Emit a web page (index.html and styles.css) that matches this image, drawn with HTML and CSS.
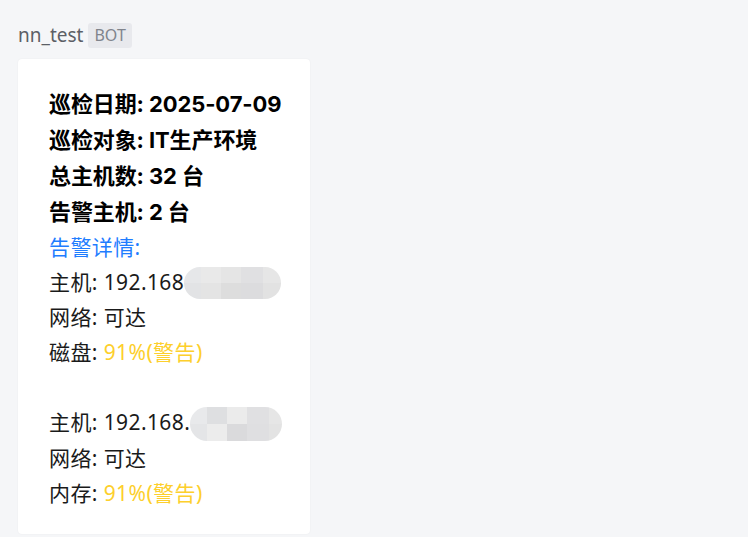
FILE: index.html
```html
<!DOCTYPE html>
<html lang="zh-CN">
<head>
<meta charset="utf-8">
<link rel="stylesheet" href="styles.css">
</head>
<body>
<div class="msg">
  <div class="sender">
    <span class="name">nn_test</span>
    <span class="badge">BOT</span>
  </div>
  <div class="card">
    <div class="b">巡检日期: 2025-07-09</div>
    <div class="b">巡检对象: IT生产环境</div>
    <div class="b">总主机数: 32 台</div>
    <div class="b">告警主机: 2 台</div>
    <div class="n blue">告警详情:</div>
    <div class="n">主机: 192.168<span class="mosaic m1"></span></div>
    <div class="n">网络: 可达</div>
    <div class="n">磁盘: <span class="warn">91%(警告)</span></div>
    <div class="n">&nbsp;</div>
    <div class="n">主机: 192.168.<span class="mosaic m2"></span></div>
    <div class="n">网络: 可达</div>
    <div class="n">内存: <span class="warn">91%(警告)</span></div>
  </div>
</div>
</body>
</html>
```

FILE: styles.css
```css
html, body {
  margin: 0;
  padding: 0;
}
body {
  background: #f5f6f8;
  font-family: "Noto Sans", "Noto Sans CJK SC", sans-serif;
  color: #000;
  width: 748px;
  height: 537px;
  overflow: hidden;
}
.msg {
  padding: 23px 0 0 18px;
}
.sender {
  display: flex;
  align-items: center;
  gap: 5px;
  height: 25px;
}
.name {
  font-size: 19px;
  color: #5c5f66;
  line-height: 25px;
}
.badge {
  background: #e8e9ed;
  color: #80848c;
  font-size: 16px;
  line-height: 25px;
  height: 25px;
  padding: 0 6px;
  border-radius: 3px;
}
.card {
  margin-top: 11px;
  width: 292px;
  height: 475px;
  box-sizing: border-box;
  background: #fff;
  border-radius: 4px;
  box-shadow: 0 0 2px rgba(0, 0, 0, 0.06);
  padding: 27px 0 0 31px;
}
.b {
  font-family: "Inter", "Noto Sans CJK SC", sans-serif;
  font-size: 22px;
  font-weight: 700;
  line-height: 36px;
  white-space: nowrap;
  letter-spacing: -0.1px;
}
.n {
  font-family: "Noto Sans", "Noto Sans CJK SC", sans-serif;
  font-size: 21px;
  line-height: 35px;
  white-space: nowrap;
  letter-spacing: 0.4px;
  color: #1a1a1a;
}
.blue {
  color: #1f7dff;
}
.warn {
  color: #fdcf2c;
}
.mosaic {
  display: inline-block;
  vertical-align: -9px;
  width: 97px;
  height: 32px;
  border-radius: 16px;
  background:
    linear-gradient(to right, #e6e7e9 0 17px, #e9e9e9 17px 37px, #e5e5e5 37px 57px, #e0e0e2 57px 79px, #e6e6e6 79px) top / 100% 50% no-repeat,
    linear-gradient(to right, #e2e3e5 0 17px, #e4e4e4 17px 37px, #dddddd 37px 57px, #dcdcde 57px 79px, #e2e2e2 79px) bottom / 100% 50% no-repeat;
}
.m2 {
  width: 92px;
  height: 34px;
  vertical-align: -11px;
  border-radius: 17px;
  background:
    linear-gradient(to right, #e8e9eb 0 17px, #dedfe1 17px 37px, #ebebeb 37px 57px, #e0e0e2 57px 79px, #e6e6e6 79px) top / 100% 50% no-repeat,
    linear-gradient(to right, #e4e5e7 0 17px, #ececec 17px 37px, #dadadc 37px 57px, #dfdfe1 57px 79px, #e3e3e3 79px) bottom / 100% 50% no-repeat;
}
```
